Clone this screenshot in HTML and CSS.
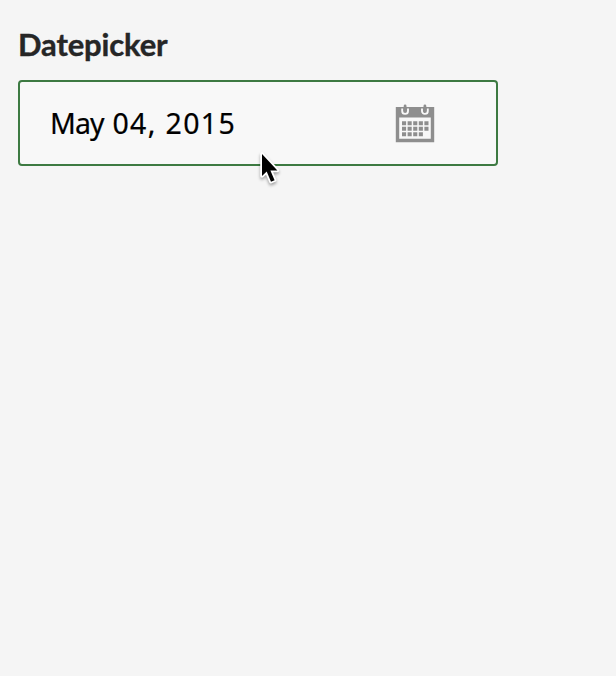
FILE: index.html
```html
<!DOCTYPE html>
<html lang="en">
<head>
<meta charset="utf-8">
<title>Datepicker</title>
<link rel="stylesheet" href="styles.css">
</head>
<body>
<main class="field">
  <label class="label" for="date">Datepicker</label>
  <div class="control" id="date" tabindex="0">
    <span class="value"><span class="month">May</span> 04, 2015</span>
    <svg class="calendar" width="40" height="40" viewBox="0 0 40 40" aria-hidden="true">
      <path fill="#8e8e8e" fill-rule="evenodd" d="M0.800 4H39.200V39.300H0.800ZM4.200 14.500V35.800H35.800V14.500Z"/>
      <path fill="none" stroke="#f8f8f8" stroke-width="1.900" d="M7.200 5.500V8A2.900 2.900 0 0 0 13 8V5.500M27 5.500V8A2.900 2.900 0 0 0 32.800 8V5.500"/>
      <path stroke="#8e8e8e" stroke-width="2.800" stroke-linecap="round" d="M10.100 3V7.500M29.900 3V7.500"/>
      <path stroke="#8e8e8e" stroke-width="4" stroke-dasharray="4.100 1.500" d="M7 20.300H33.500M7 25.800H33.500M7 31.300H27.900"/>
    </svg>
    <svg class="pointer" width="32" height="44" viewBox="0 0 32 44" aria-hidden="true">
      <path fill="#000" stroke="#fff" stroke-width="3.600" paint-order="stroke" stroke-linejoin="round" d="M6 5V27L10.700 22.600L15 32.700L18.600 31.200L14.400 21.400H21.400Z"/>
    </svg>
  </div>
</main>
</body>
</html>
```
FILE: styles.css
```css
* {
  box-sizing: border-box;
}

body {
  margin: 0;
  min-height: 100vh;
  background: #f5f5f5;
}

.field {
  width: 498px;
  padding: 24px 0 0 18px;
}

.label {
  display: block;
  height: 56px;
  font: bold 31px/40px Lato, sans-serif;
  letter-spacing: -0.150px;
  color: #262626;
  -webkit-text-stroke: 0.400px #262626;
}

.control {
  position: relative;
  display: flex;
  align-items: center;
  justify-content: space-between;
  width: 480px;
  height: 86px;
  padding: 0 61px 0 30px;
  border: 2px solid #3d7a42;
  border-radius: 4px;
  outline: none;
  background: #f8f8f8;
}

.value {
  font: 28.500px/40px "Noto Sans", sans-serif;
  letter-spacing: 1.350px;
  white-space: nowrap;
  color: #000;
  -webkit-text-stroke: 0.200px #000;
}

.month {
  letter-spacing: -0.900px;
}

.calendar {
  flex: none;
}

.pointer {
  position: absolute;
  left: 236px;
  top: 67px;
  filter: drop-shadow(0 2px 1.500px rgba(0, 0, 0, 0.35));
}
```
